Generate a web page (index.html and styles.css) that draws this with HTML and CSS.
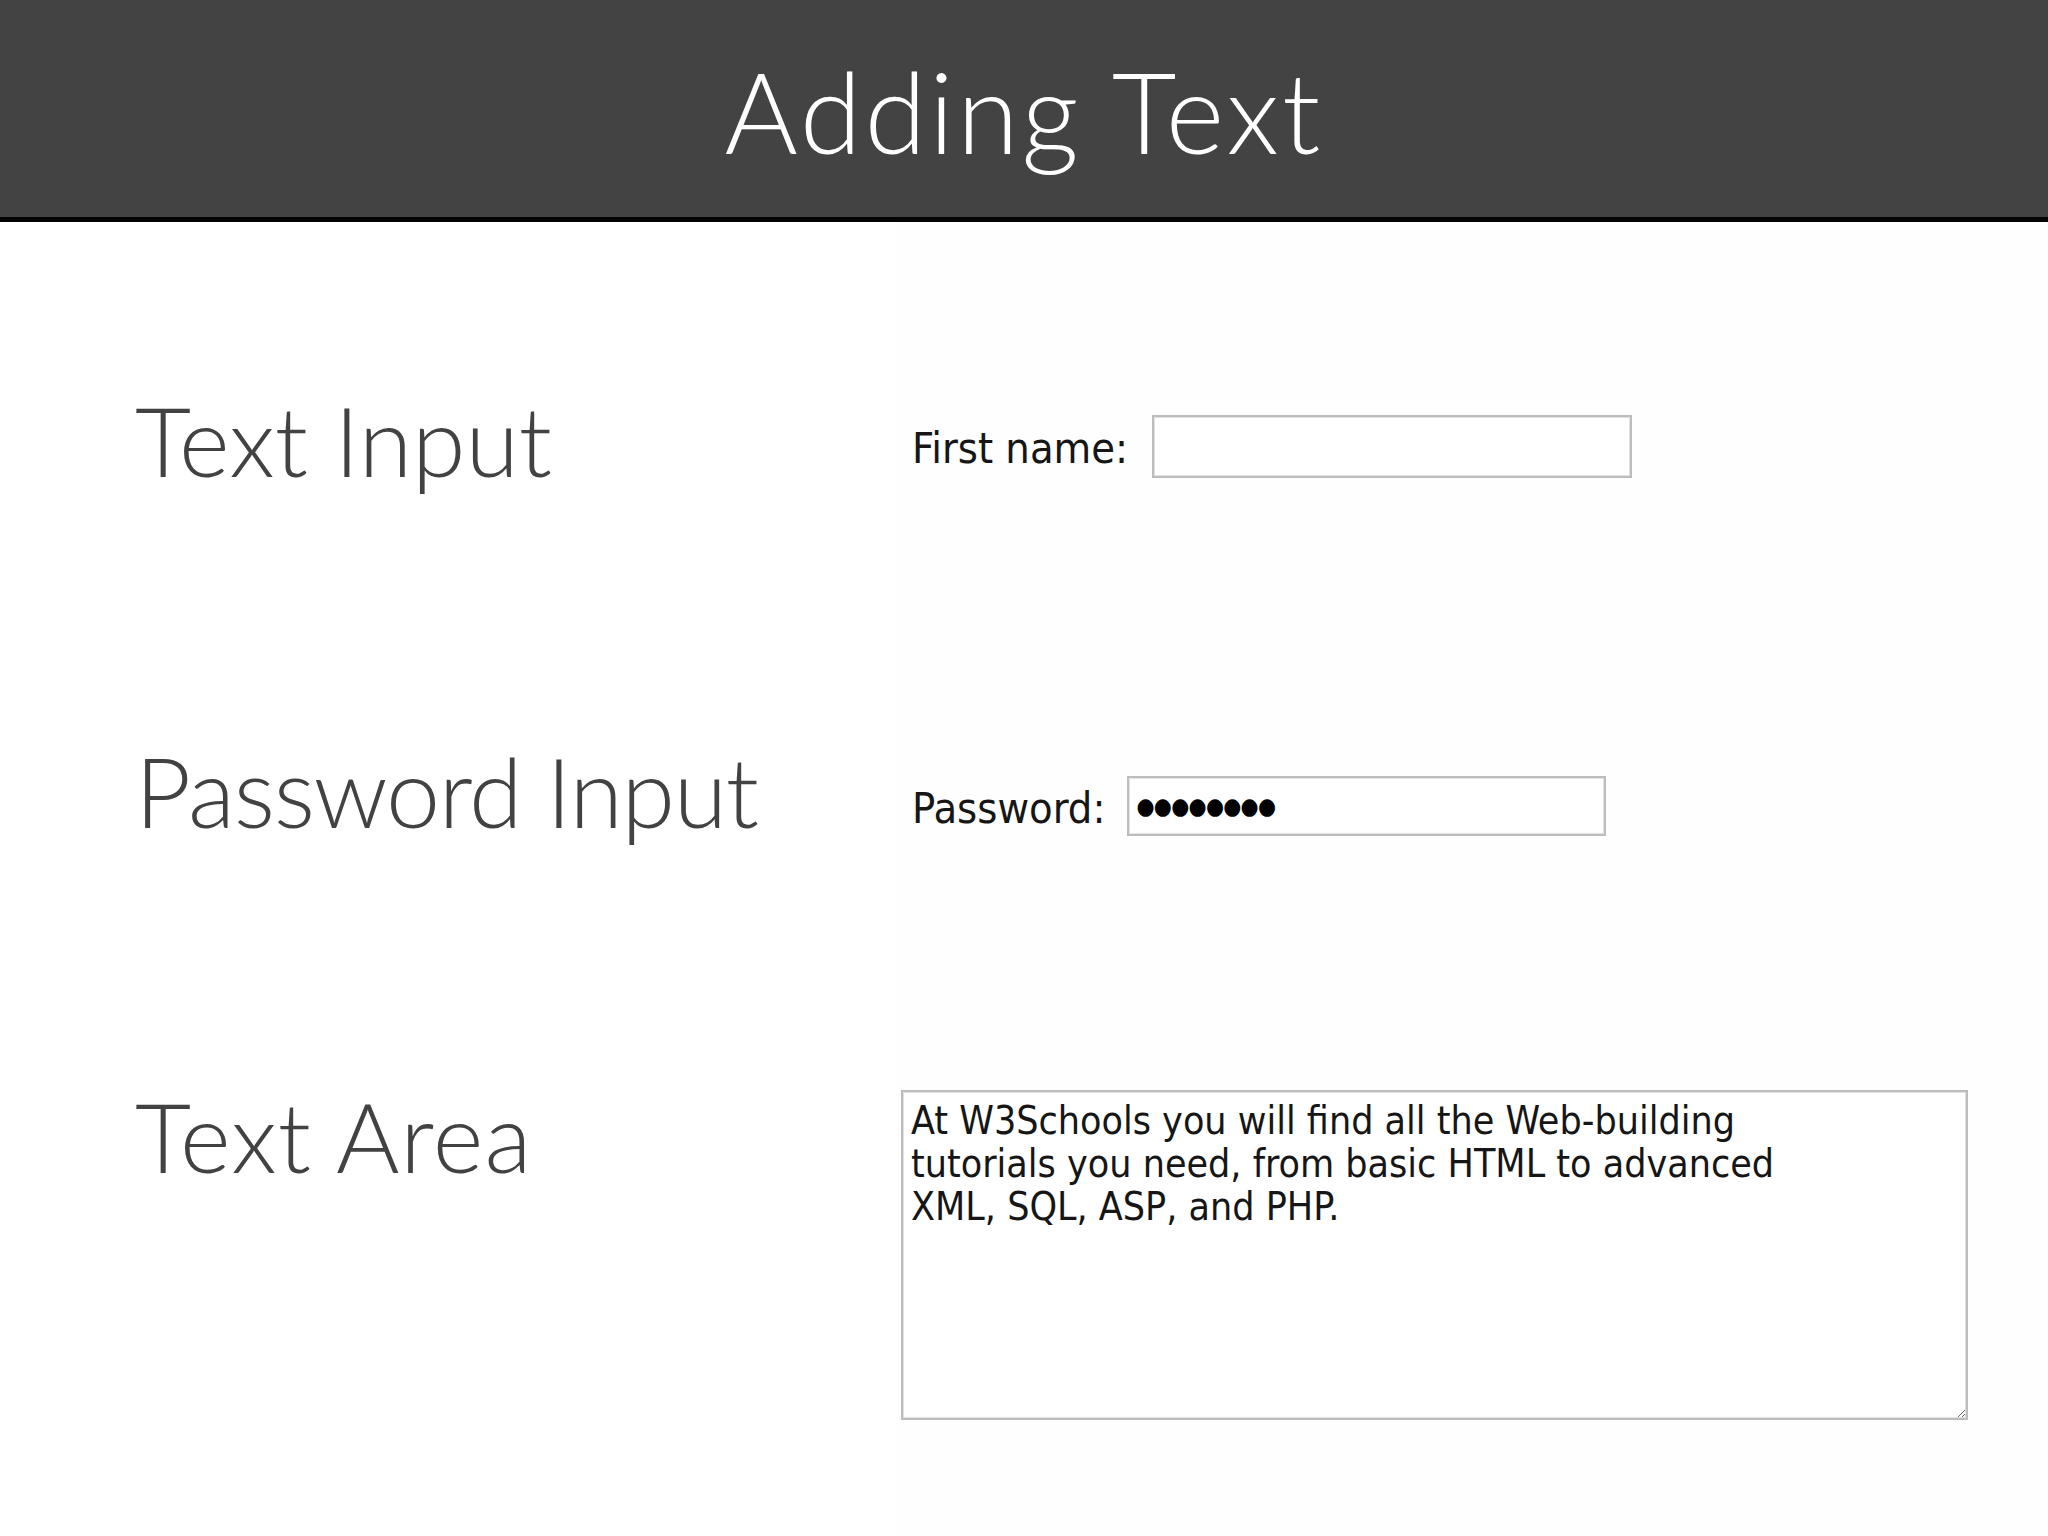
FILE: index.html
```html
<!DOCTYPE html>
<html lang="en">
<head>
<meta charset="utf-8">
<title>Adding Text</title>
<link rel="stylesheet" href="styles.css">
</head>
<body>
<header class="topbar">
  <h1 class="title">Adding Text</h1>
</header>
<main class="slide">
  <h2 class="label">Text Input</h2>
  <div class="demo demo-text">
    <label class="field-label" for="fname">First name:</label>
    <input id="fname" class="field field-name" type="text">
  </div>

  <h2 class="label label-tight">Password Input</h2>
  <div class="demo demo-pass">
    <span class="field-label">Password:</span>
    <div class="field field-pass"><span class="dots">●●●●●●●●</span></div>
  </div>

  <h2 class="label label-wide">Text Area</h2>
  <div class="demo demo-area">
    <textarea class="area">At W3Schools you will find all the Web-building
tutorials you need, from basic HTML to advanced
XML, SQL, ASP, and PHP.</textarea>
  </div>
</main>
</body>
</html>
```

FILE: styles.css
```css
html, body {
  margin: 0;
  padding: 0;
  background: #ffffff;
}

body {
  width: 2048px;
  height: 1536px;
  overflow: hidden;
  font-family: "Lato", "Open Sans", sans-serif;
}

.topbar {
  box-sizing: border-box;
  height: 222px;
  padding-top: 55px;
  background: #434343;
  border-bottom: 5px solid #050505;
}

.title {
  margin: 0;
  font-family: "Lato", sans-serif;
  font-weight: 300;
  font-size: 112px;
  line-height: 1;
  color: #ffffff;
  text-align: center;
  letter-spacing: 3px;
}

.slide {
  box-sizing: border-box;
  height: 1314px;
  padding-top: 169px;
  display: grid;
  grid-template-columns: 896px 1fr;
  grid-template-rows: 351px 345px 1fr;
  background: linear-gradient(to right, #ffffff 896px, #fefefe 896px);
}

.label {
  margin: 0;
  padding-left: 135px;
  font-family: "Lato", sans-serif;
  font-weight: 300;
  font-size: 97px;
  line-height: 1;
  color: #424242;
}

.label-tight {
  letter-spacing: -1.3px;
}

.label-wide {
  letter-spacing: 1px;
}

.demo {
  display: flex;
  align-items: center;
  align-self: start;
  padding-left: 16px;
  font-family: "DejaVu Sans Condensed", "DejaVu Sans", sans-serif;
  font-stretch: condensed;
  color: #161616;
}

.demo-text {
  margin-top: 24px;
  gap: 24px;
}

.demo-pass {
  margin-top: 34px;
  gap: 22px;
}

.demo-area {
  margin-top: 3px;
  padding-left: 5px;
}

.field-label {
  font-size: 43px;
  line-height: 1;
  padding-top: 4px;
}

.field {
  box-sizing: border-box;
  margin: 0;
  background: #ffffff;
  border: 2px solid #bdbdbd;
  box-shadow: inset 0 0 0 1px #e2e2e2;
  border-radius: 0;
  outline: none;
}

.field-name {
  width: 480px;
  height: 63px;
}

.field-pass {
  width: 479px;
  height: 60px;
  display: flex;
  align-items: center;
  padding-left: 7px;
}

.dots {
  font-family: "DejaVu Sans", sans-serif;
  font-size: 23px;
  line-height: 1;
  letter-spacing: -0.7px;
  color: #000000;
}

.area {
  box-sizing: border-box;
  width: 1067px;
  height: 330px;
  margin: 0;
  padding: 7px 8px;
  border: 2px solid #bdbdbd;
  box-shadow: inset 0 0 0 1px #e2e2e2;
  background: #ffffff;
  font-family: "DejaVu Sans Condensed", "DejaVu Sans", sans-serif;
  font-stretch: condensed;
  font-size: 39px;
  line-height: 43px;
  color: #161616;
  white-space: pre;
  overflow: hidden;
  outline: none;
}
```
